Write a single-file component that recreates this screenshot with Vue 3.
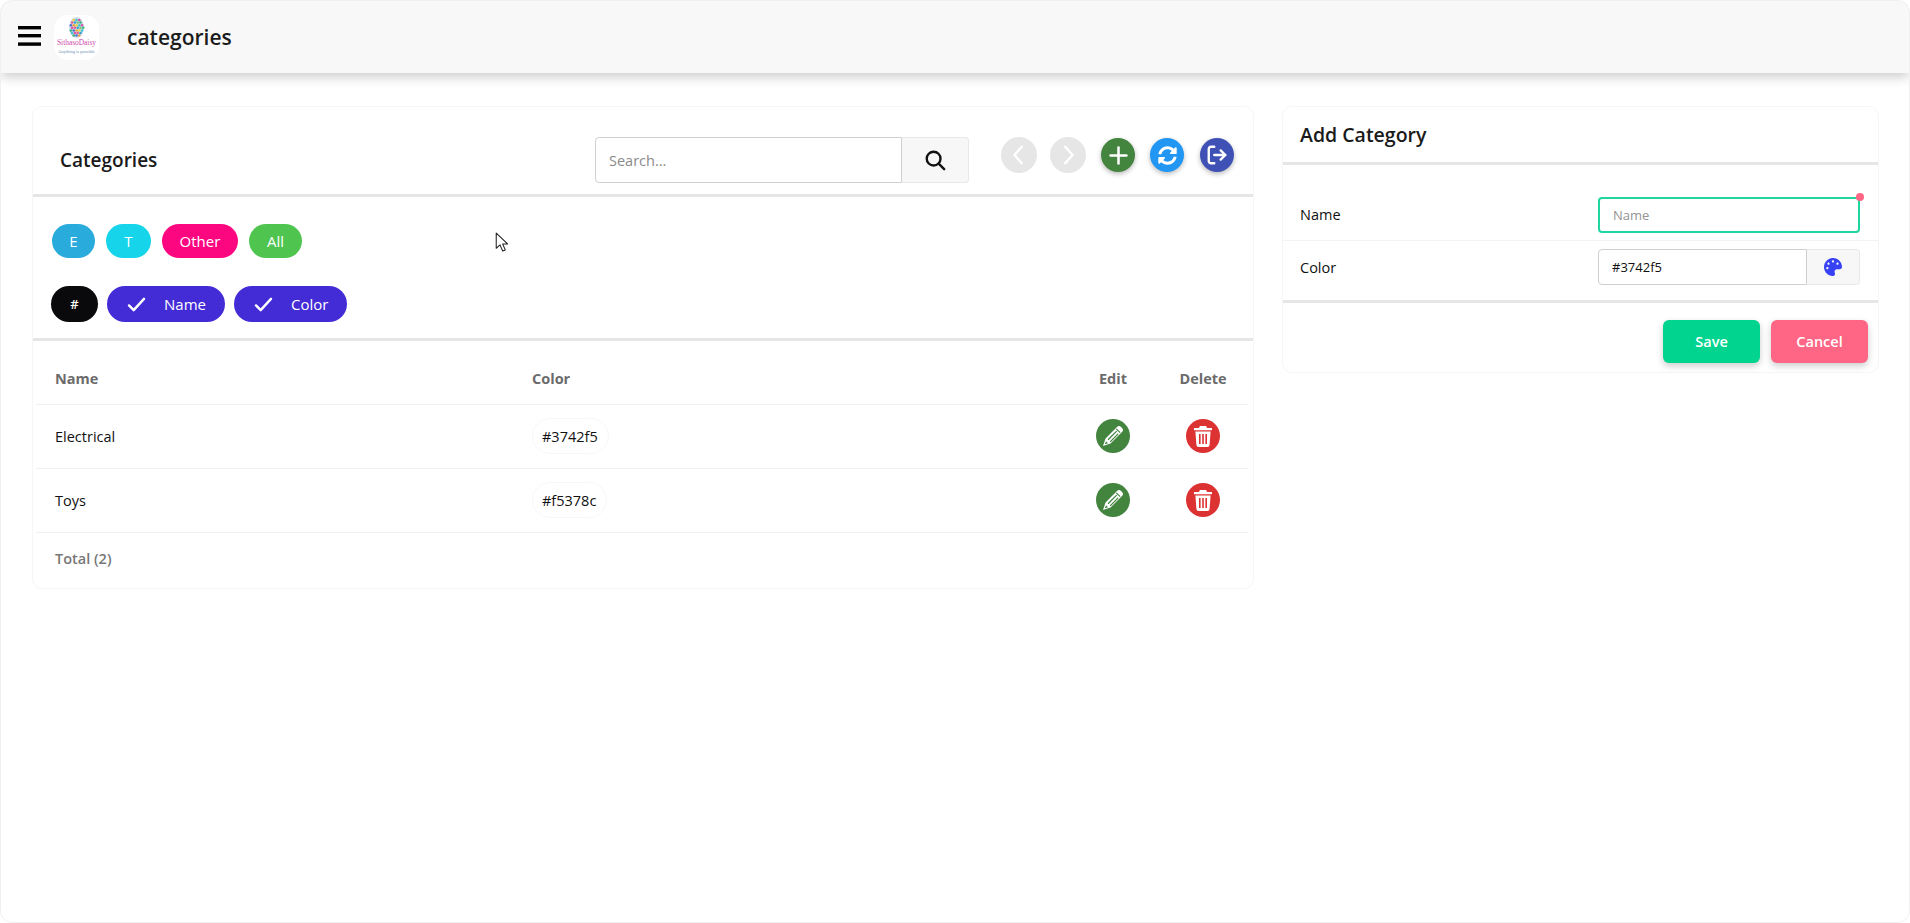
<script setup>
const filters = [
  { label: 'E', bg: '#29abdc', w: 43 },
  { label: 'T', bg: '#16d5ea', w: 45 },
  { label: 'Other', bg: '#fd0781', w: 76 },
  { label: 'All', bg: '#4fc54f', w: 53 },
]
const rows = [
  { name: 'Electrical', color: '#3742f5' },
  { name: 'Toys', color: '#f5378c' },
]

// little coloured specks of the logo globe
const speckColors = ['#e8a33d', '#36b37e', '#2f9fd8', '#d94fa8', '#f0d040', '#4a6fd8', '#7cc576', '#e8618c', '#39c5d8']
const specks = []
for (let y = 0; y < 7; y++) {
  for (let x = 0; x < 5; x++) {
    const cx = 16.9 + x * 2.8 + (y % 2) * 1.2
    const cy = 5 + y * 2.6
    if (((cx - 22.5) / 7) ** 2 + ((cy - 12.5) / 9.8) ** 2 < 1) {
      specks.push({ cx, cy, fill: speckColors[(x * 4 + y * 7) % speckColors.length] })
    }
  }
}
</script>

<template>
  <div class="page">
    <header class="topbar">
      <svg class="burger" viewBox="0 0 23 20"><rect width="23" height="3.4" y="0" /><rect width="23" height="3.4" y="8" /><rect width="23" height="3.4" y="16.4" /></svg>
      <div class="logo">
        <svg viewBox="0 0 45 45" width="45" height="45">
          <ellipse cx="22.5" cy="12.5" rx="7.5" ry="10.5" fill="#cfdbe6" />
          <circle v-for="(s, i) in specks" :key="i" :cx="s.cx" :cy="s.cy" r="1.25" :fill="s.fill" />
          <text x="22.5" y="29.5" text-anchor="middle" class="logo-name">SithasoDaisy</text>
          <text x="22.5" y="38" text-anchor="middle" class="logo-tag">Anything is possible</text>
        </svg>
      </div>
      <h1 class="page-title">categories</h1>
    </header>

    <main class="content">
      <section class="card list-card">
        <div class="list-head">
          <h2 class="list-title">Categories</h2>
          <div class="search">
            <input class="search-input" placeholder="Search..." />
            <button class="search-btn">
              <svg viewBox="0 0 24 24" width="22" height="22" fill="none" stroke="#111" stroke-width="2.6" stroke-linecap="round"><circle cx="10.5" cy="10.5" r="7.5" /><line x1="16" y1="16" x2="22" y2="22" /></svg>
            </button>
          </div>
          <div class="actions">
            <button class="round nav">
              <svg viewBox="0 0 24 24" width="22" height="26" fill="none" stroke="#fff" stroke-width="2.6" stroke-linecap="round" stroke-linejoin="round"><polyline points="15,3 7,12 15,21" /></svg>
            </button>
            <button class="round nav nav-next">
              <svg viewBox="0 0 24 24" width="22" height="26" fill="none" stroke="#fff" stroke-width="2.6" stroke-linecap="round" stroke-linejoin="round"><polyline points="9,3 17,12 9,21" /></svg>
            </button>
            <button class="round act green">
              <svg viewBox="0 0 24 24" width="19" height="19" fill="none" stroke="#fff" stroke-width="3.2" stroke-linecap="round"><line x1="12" y1="2" x2="12" y2="22" /><line x1="2" y1="12" x2="22" y2="12" /></svg>
            </button>
            <button class="round act blue">
              <svg viewBox="0 0 512 512" width="19" height="19" fill="#fff"><path d="M370.72 133.28C339.458 104.008 298.888 87.962 255.848 88c-77.458.068-144.328 53.178-162.791 126.85-1.344 5.363-6.122 9.15-11.651 9.15H24.103c-7.498 0-13.194-6.807-11.807-14.176C33.933 94.924 134.813 8 256 8c66.448 0 126.791 26.136 171.315 68.685L463.03 40.97C478.149 25.851 504 36.559 504 57.941V192c0 13.255-10.745 24-24 24H345.941c-21.382 0-32.09-25.851-16.971-40.971l41.75-41.749zM32 296h134.059c21.382 0 32.09 25.851 16.971 40.971l-41.75 41.75c31.262 29.273 71.835 45.319 114.876 45.28 77.418-.07 144.315-53.144 162.787-126.849 1.344-5.363 6.122-9.15 11.651-9.15h57.304c7.498 0 13.194 6.807 11.807 14.176C478.067 417.076 377.187 504 256 504c-66.448 0-126.791-26.136-171.315-68.685L48.97 471.03C33.851 486.149 8 475.441 8 454.059V320c0-13.255 10.745-24 24-24z" /></svg>
            </button>
            <button class="round act indigo">
              <svg viewBox="0 0 24 24" width="22" height="22" fill="none" stroke="#fff" stroke-width="2.6" stroke-linecap="round" stroke-linejoin="round"><path d="M9 3H5.5A2.5 2.5 0 0 0 3 5.5v13A2.5 2.5 0 0 0 5.5 21H9" /><line x1="9" y1="12" x2="21" y2="12" /><polyline points="16,7 21,12 16,17" /></svg>
            </button>
          </div>
        </div>

        <div class="chips-box">
          <div class="chips">
            <span v-for="f in filters" :key="f.label" class="chip" :style="{ background: f.bg, width: f.w + 'px' }">{{ f.label }}</span>
          </div>
          <div class="chips columns">
            <span class="col-chip hash">#</span>
            <span class="col-chip name-chip">
              <svg viewBox="0 0 20 16" width="19" height="15" fill="none" stroke="#fff" stroke-width="2.6" stroke-linecap="round" stroke-linejoin="round"><polyline points="2,9 7,14 18,2" /></svg>
              Name
            </span>
            <span class="col-chip color-chip">
              <svg viewBox="0 0 20 16" width="19" height="15" fill="none" stroke="#fff" stroke-width="2.6" stroke-linecap="round" stroke-linejoin="round"><polyline points="2,9 7,14 18,2" /></svg>
              Color
            </span>
          </div>
        </div>

        <table class="grid">
          <thead>
            <tr>
              <th class="c-name">Name</th>
              <th class="c-color">Color</th>
              <th class="c-btn">Edit</th>
              <th class="c-btn">Delete</th>
            </tr>
          </thead>
          <tbody>
            <tr v-for="r in rows" :key="r.name">
              <td class="c-name">{{ r.name }}</td>
              <td class="c-color"><span class="hex">{{ r.color }}</span></td>
              <td class="c-btn">
                <button class="cell-btn edit">
                  <svg viewBox="0 0 24 24" width="24" height="24" fill="#fff"><path fill-rule="evenodd" d="M2 22l2.5-7.5L16 3a2.8 2.8 0 0 1 4 0l1 1a2.8 2.8 0 0 1 0 4L9.5 19.5zM14.9 5.2l3.9 3.9.8-.8-3.9-3.9zM6.6 15.3l.9.9 8.6-8.6-.9-.9zM8.7 17.4l.9.9 8-8-.9-.9zM5 17.2l-1 3 3-1z" /></svg>
                </button>
              </td>
              <td class="c-btn">
                <button class="cell-btn del">
                  <svg viewBox="0 0 24 24" width="24" height="24" fill="#fff"><path fill-rule="evenodd" d="M9 2h6l1.2 2H21v2.2H3V4h4.8zM4.4 7.4h15.2l-1 13.4A2.2 2.2 0 0 1 16.4 23H7.6a2.2 2.2 0 0 1-2.2-2.2zM8 10v10h1.6V10zm3.2 0v10h1.6V10zm3.2 0v10H16V10z" /></svg>
                </button>
              </td>
            </tr>
          </tbody>
        </table>
        <div class="total">Total (2)</div>

        <svg class="cursor" viewBox="0 0 12 19" width="13" height="20"><path d="M1 1v14.5l3.6-3.3 2.5 5.8 2.5-1-2.5-5.6h4.9z" fill="#fff" stroke="#222" stroke-width="1" stroke-linejoin="round" /></svg>
      </section>

      <section class="card form-card">
        <h2 class="form-title">Add Category</h2>
        <div class="form-body">
          <div class="form-row first">
            <label>Name</label>
            <div class="field required">
              <input class="text-input focused" placeholder="Name" />
            </div>
          </div>
          <div class="form-row">
            <label>Color</label>
            <div class="field joined">
              <input class="text-input" value="#3742f5" />
              <button class="palette-btn">
                <svg viewBox="0 0 512 512" width="18" height="18" fill="#3742f5"><path d="M204.3 5C104.9 24.4 24.8 104.3 5.2 203.4c-37 187 131.7 326.4 258.8 306.7 41.2-6.4 61.4-54.6 42.5-91.7-23.1-45.4 9.9-98.4 60.9-98.4h79.7c35.8 0 64.8-29.6 64.9-65.3C511.5 97.1 368.1-26.9 204.3 5zM96 320c-17.7 0-32-14.3-32-32s14.3-32 32-32 32 14.3 32 32-14.3 32-32 32zm32-128c-17.7 0-32-14.3-32-32s14.3-32 32-32 32 14.3 32 32-14.3 32-32 32zm128-64c-17.7 0-32-14.3-32-32s14.3-32 32-32 32 14.3 32 32-14.3 32-32 32zm128 64c-17.7 0-32-14.3-32-32s14.3-32 32-32 32 14.3 32 32-14.3 32-32 32z" /></svg>
              </button>
            </div>
          </div>
        </div>
        <div class="form-foot">
          <button class="foot-btn save">Save</button>
          <button class="foot-btn cancel">Cancel</button>
        </div>
      </section>
    </main>
  </div>
</template>

<style>
html, body { margin: 0; background: #fff; }
</style>

<style scoped>
* { box-sizing: border-box; }
.page {
  height: 923px; overflow: hidden; background: #fff;
  border: 1px solid #f0f0f0; border-radius: 12px;
  font-family: "Open Sans", "Noto Sans", sans-serif; color: #111;
}

.topbar {
  height: 72px; display: flex; align-items: center; padding: 0 0 0 17px;
  background: #f8f8f8; border-radius: 12px 12px 0 0;
  box-shadow: 0 4px 12px rgba(0,0,0,0.2);
}
.burger { width: 23px; height: 20px; fill: #000; margin-top: -3px; }
.logo {
  width: 45px; height: 45px; margin-left: 13px; background: #fff;
  border-radius: 14px; overflow: hidden;
}
.logo-name { font: 7.4px "Liberation Serif", serif; fill: #d04aa8; }
.logo-tag { font: 4.5px "Liberation Serif", serif; fill: #6c8fb5; }
.page-title { margin: 0 0 0 28px; font-size: 21px; font-weight: 600; color: #1c1c1c; }

.content { display: flex; align-items: flex-start; gap: 28px; padding: 33px 0 0 31px; }
.card {
  background: #fff; border: 1px solid #f5f5f5; border-radius: 10px;
}
.list-card { position: relative; width: 1222px; height: 483px; }
.list-head {
  height: 90px; display: flex; align-items: center;
  border-bottom: 3px solid #e6e6e6; padding: 19px 0 0 27px;
}
.list-title { margin: 0; width: 535px; font-size: 19px; font-weight: 600; color: #1a1a1a; }
.search { display: flex; width: 374px; height: 46px; }
.search-input {
  width: 307px; height: 100%; padding: 0 13px;
  border: 1.5px solid #d0d0d0; border-right-width: 1px; border-radius: 4px 0 0 4px;
  font: 14.5px "Open Sans", sans-serif; outline: none;
}
.search-input::placeholder { color: #8a8a8a; }
.search-btn {
  flex: 1; display: flex; align-items: center; justify-content: center;
  background: #f7f7f7; border: 1px solid #e8e8e8; border-left: 0; border-radius: 0 4px 4px 0; padding: 0;
}
.actions { display: flex; align-items: center; margin: -10px 0 0 32px; }
.round {
  display: flex; align-items: center; justify-content: center; padding: 0;
  border: 0; border-radius: 50%;
}
.nav { width: 36px; height: 36px; background: #e6e6e6; }
.nav-next { margin-left: 13px; }
.act { width: 34px; height: 34px; box-shadow: 0 2px 5px rgba(0,0,0,0.28); margin-left: 15px; }
.act.indigo { margin-left: 16px; }
.green { background: #43843f; }
.blue { background: #2196f3; }
.indigo { background: #3f51b5; }

.chips-box { height: 144px; border-bottom: 3px solid #e6e6e6; padding: 27px 0 0 19px; }
.chips { display: flex; gap: 11px; }
.chip {
  height: 34px; display: flex; align-items: center; justify-content: center;
  border-radius: 17px; color: #fff; font-size: 15px;
}
.columns { margin-top: 28px; gap: 9px; margin-left: -1px; }
.col-chip {
  height: 36px; display: flex; align-items: center; border-radius: 18px;
  background: #432bd6; color: #fff; font-size: 15px;
}
.hash { width: 47px; justify-content: center; background: #0a0a0c; font-size: 13px; font-weight: 600; }
.name-chip { width: 118px; padding-left: 20px; gap: 18px; }
.color-chip { width: 113px; padding-left: 20px; gap: 18px; }

.grid { width: 1212px; margin-left: 3px; border-collapse: collapse; table-layout: fixed; }
.grid th { height: 63px; padding-top: 13px; font-size: 14.5px; font-weight: 700; color: #6b6b6b; text-align: left; }
.grid tr { border-bottom: 1px solid #f1f1f1; }
.grid td { height: 64px; font-size: 14.5px; padding: 0; }
.c-name { width: 496px; padding-left: 19px !important; }
.c-color { padding-left: 0 !important; }
.c-btn { width: 90px; text-align: center !important; }
.hex {
  display: inline-flex; align-items: center; height: 36px; padding: 0 10px 0 9px;
  border: 1px solid #f7f7f7; border-radius: 18px;
}
.cell-btn {
  width: 34px; height: 34px; padding: 0; border: 0; border-radius: 50%;
  display: inline-flex; align-items: center; justify-content: center; vertical-align: middle;
}
.edit { background: #43843f; }
.del { background: #dc3232; }
.total { padding: 16px 0 0 22px; font-size: 14.5px; font-weight: 600; color: #777; }
.cursor { position: absolute; left: 462px; top: 125px; }

.form-card { width: 597px; height: 267px; }
.form-title {
  margin: 0; height: 58px; display: flex; align-items: center; padding-left: 17px;
  font-size: 19.5px; font-weight: 600; color: #1a1a1a; border-bottom: 3px solid #e6e6e6;
}
.form-body { border-bottom: 3px solid #e6e6e6; height: 138px; padding-top: 32px; }
.form-row {
  display: flex; align-items: center; justify-content: space-between;
  height: 52px; padding: 0 18px 0 17px; font-size: 14.5px;
}
.form-row.first { height: 44px; border-bottom: 1px solid #f3f3f3; padding-bottom: 8px; }
.field { position: relative; display: flex; width: 262px; height: 36px; }
.required::after {
  content: ''; position: absolute; right: -4px; top: -4px;
  width: 8px; height: 8px; border-radius: 50%; background: #ff6584;
}
.text-input {
  flex: 1; min-width: 0; height: 100%; padding: 0 13px;
  border: 1.5px solid #cfcfcf; border-radius: 4px; outline: none;
  font: 13px "Open Sans", sans-serif; color: #111; background: #fff;
}
.text-input::placeholder { color: #949494; }
.focused { border: 2px solid #20d6a0; }
.joined .text-input { border-radius: 4px 0 0 4px; }
.palette-btn {
  width: 53px; display: flex; align-items: center; justify-content: center; padding: 0;
  background: #f7f7f7; border: 1px solid #e8e8e8; border-left: 0; border-radius: 0 4px 4px 0;
}
.form-foot { display: flex; justify-content: flex-end; gap: 11px; padding: 17px 10px 0 0; }
.foot-btn {
  width: 97px; height: 43px; border: 0; border-radius: 6px; color: #fff;
  font: 600 14.5px "Open Sans", sans-serif; box-shadow: 0 3px 7px rgba(0,0,0,0.2);
}
.save { background: #00d48f; }
.cancel { background: #ff6584; }
</style>
